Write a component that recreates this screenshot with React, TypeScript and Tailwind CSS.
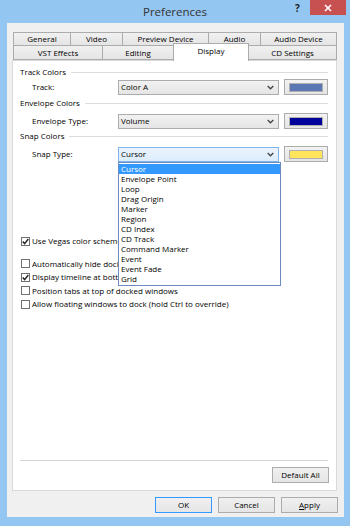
import React from "react";

function Chevron() {
  return (
    <svg width="7" height="5" viewBox="0 0 7 5" className="mr-[4px]">
      <path d="M0.7 1 L3.5 3.8 L6.3 1" stroke="#444" strokeWidth="1.3" fill="none" />
    </svg>
  );
}

function Select({ value, focus, children }: { value: string; focus?: boolean; children?: React.ReactNode }) {
  return (
    <div
      className={
        "relative w-[161px] h-[15px] border flex items-center justify-between pl-[2px] " +
        (focus
          ? "border-[#7eb4ea] bg-gradient-to-b from-[#ecf4fc] to-[#dcecfc]"
          : "border-[#acacac] bg-gradient-to-b from-[#f2f2f2] to-[#e5e5e5]")
      }
    >
      <span className="leading-none">{value}</span>
      <Chevron />
      {children}
    </div>
  );
}

function Swatch({ color }: { color: string }) {
  return (
    <div className="ml-[5px] w-[44px] h-[16px] border border-[#acacac] bg-gradient-to-b from-[#f2f2f2] to-[#e5e5e5] flex items-center justify-center">
      <div className={"w-[34px] h-[9px] border border-[#b0b0b0] " + color} />
    </div>
  );
}

function Header({ label, className }: { label: string; className: string }) {
  return (
    <div className={"h-[12px] flex items-center " + className}>
      <span className="leading-none">{label}</span>
      <div className="flex-1 h-px bg-[#dcdcdc] ml-[5px]" />
    </div>
  );
}

function Check({ checked, label, clip }: { checked?: boolean; label: string; clip?: boolean }) {
  return (
    <div className="flex items-center h-[13.5px] pl-[1px]">
      <div className="w-[9px] h-[9px] shrink-0 border border-[#707070] bg-white flex items-center justify-center">
        {checked && (
          <svg width="7" height="7" viewBox="0 0 7 7">
            <path d="M0.7 3.6 L2.6 5.6 L6.3 1" stroke="#222" strokeWidth="1.4" fill="none" />
          </svg>
        )}
      </div>
      <span
        className={
          "ml-[2px] leading-[12px] whitespace-nowrap " + (clip ? "overflow-hidden max-w-[86px]" : "")
        }
      >
        {label}
      </span>
    </div>
  );
}

function Tab({ label, w, h }: { label: string; w: string; h: string }) {
  return (
    <div
      className={
        "border border-[#acacac] -ml-px first:ml-0 bg-gradient-to-b from-[#f0f0f0] to-[#e5e5e5] flex items-center justify-center leading-none " +
        w +
        " " +
        h
      }
    >
      {label}
    </div>
  );
}

function Btn({ children, className }: { children: React.ReactNode; className?: string }) {
  return (
    <div
      className={
        "w-[57px] h-[16px] border bg-gradient-to-b from-[#f0f0f0] to-[#e5e5e5] flex items-center justify-center leading-none " +
        (className ?? "border-[#acacac]")
      }
    >
      {children}
    </div>
  );
}

const items = [
  "Cursor",
  "Envelope Point",
  "Loop",
  "Drag Origin",
  "Marker",
  "Region",
  "CD Index",
  "CD Track",
  "Command Marker",
  "Event",
  "Event Fade",
  "Grid",
];

export default function App() {
  return (
    <div className="w-[350px] h-[526px] bg-[#93c6f1] flex flex-col text-[8px] text-black font-['Open_Sans','Noto_Sans',sans-serif] overflow-hidden">
      {/* title bar */}
      <div className="h-[23px] flex items-start relative">
        <div className="flex-1 h-[24px] flex items-center justify-center text-[11.5px] text-[#333]">
          Preferences
        </div>
        <div className="absolute left-[295px] top-[1px] text-[10px] font-bold text-[#222]">?</div>
        <div className="absolute left-[310px] top-0 w-[36px] h-[15px] bg-[#c75050] flex items-center justify-center">
          <svg width="8" height="8" viewBox="0 0 8 8">
            <path d="M1 1 L7 7 M7 1 L1 7" stroke="#fff" strokeWidth="1.6" />
          </svg>
        </div>
      </div>

      {/* body */}
      <div className="ml-[7px] mr-[6px] h-[494px] bg-[#f0f0f0] flex flex-col pt-[9px]">
        {/* tabs */}
        <div className="ml-[6px] flex h-[13px]">
          <Tab label="General" w="w-[58px]" h="h-[14px]" />
          <Tab label="Video" w="w-[53px]" h="h-[14px]" />
          <Tab label="Preview Device" w="w-[87px]" h="h-[14px]" />
          <Tab label="Audio" w="w-[53px]" h="h-[14px]" />
          <Tab label="Audio Device" w="w-[77px]" h="h-[14px]" />
        </div>
        <div className="ml-[6px] flex h-[15px] items-end">
          <Tab label="VST Effects" w="w-[90px]" h="h-[15px]" />
          <Tab label="Editing" w="w-[72px]" h="h-[15px]" />
          <div className="relative z-10 -ml-px w-[76px] h-[18px] -mb-px bg-white border border-b-0 border-[#acacac] flex items-start justify-center pt-[3px] leading-none">
            Display
          </div>
          <Tab label="CD Settings" w="w-[89px]" h="h-[15px]" />
        </div>

        {/* panel */}
        <div className="ml-[5px] mr-[7px] h-[431px] bg-white border border-[#d9d9d9] flex flex-col pl-[7px] pr-[8px]">
          <Header label="Track Colors" className="mt-[5px]" />
          <div className="mt-[1px] h-[16px] flex items-center pl-[12px]">
            <span className="w-[86px] leading-none">Track:</span>
            <Select value="Color A" />
            <Swatch color="bg-[#5a77b3]" />
          </div>
          <Header label="Envelope Colors" className="mt-[2px]" />
          <div className="mt-[4px] h-[16px] flex items-center pl-[12px]">
            <span className="w-[86px] leading-none">Envelope Type:</span>
            <Select value="Volume" />
            <Swatch color="bg-[#00009a]" />
          </div>
          <Header label="Snap Colors" className="mt-[1px]" />
          <div className="mt-[4px] h-[16px] flex items-center pl-[12px] relative z-20">
            <span className="w-[86px] leading-none">Snap Type:</span>
            <Select value="Cursor" focus>
              <div className="absolute left-[-1px] top-[14px] w-[163px] h-[124px] bg-white border border-[#6d8bc0] flex flex-col py-px">
                {items.map((it, i) => (
                  <div
                    key={it}
                    className={
                      "h-[10.2px] flex items-center pl-[2px] leading-none " +
                      (i === 0 ? "bg-[#3399ff] text-white" : "")
                    }
                  >
                    {it}
                  </div>
                ))}
              </div>
            </Select>
            <Swatch color="bg-[#ffe45c]" />
          </div>

          <div className="mt-[72.25px]">
            <Check checked clip label="Use Vegas color scheme" />
          </div>
          <div className="mt-[9px]">
            <Check clip label="Automatically hide docked windows" />
            <Check checked clip label="Display timeline at bottom of main window" />
            <Check label="Position tabs at top of docked windows" />
            <Check label="Allow floating windows to dock (hold Ctrl to override)" />
          </div>

          <div className="flex-1" />
          <div className="h-px bg-[#d5d5d5]" />
          <div className="mt-[6px] mb-[7px] flex justify-end -mr-px">
            <Btn>Default All</Btn>
          </div>
        </div>

        {/* dialog buttons */}
        <div className="mt-[6px] h-[16px] flex justify-end gap-[6px] pr-[6px]">
          <Btn className="border-[#3399ff]">OK</Btn>
          <Btn>Cancel</Btn>
          <Btn>
            <span>
              <span className="underline">A</span>pply
            </span>
          </Btn>
        </div>
      </div>
    </div>
  );
}
